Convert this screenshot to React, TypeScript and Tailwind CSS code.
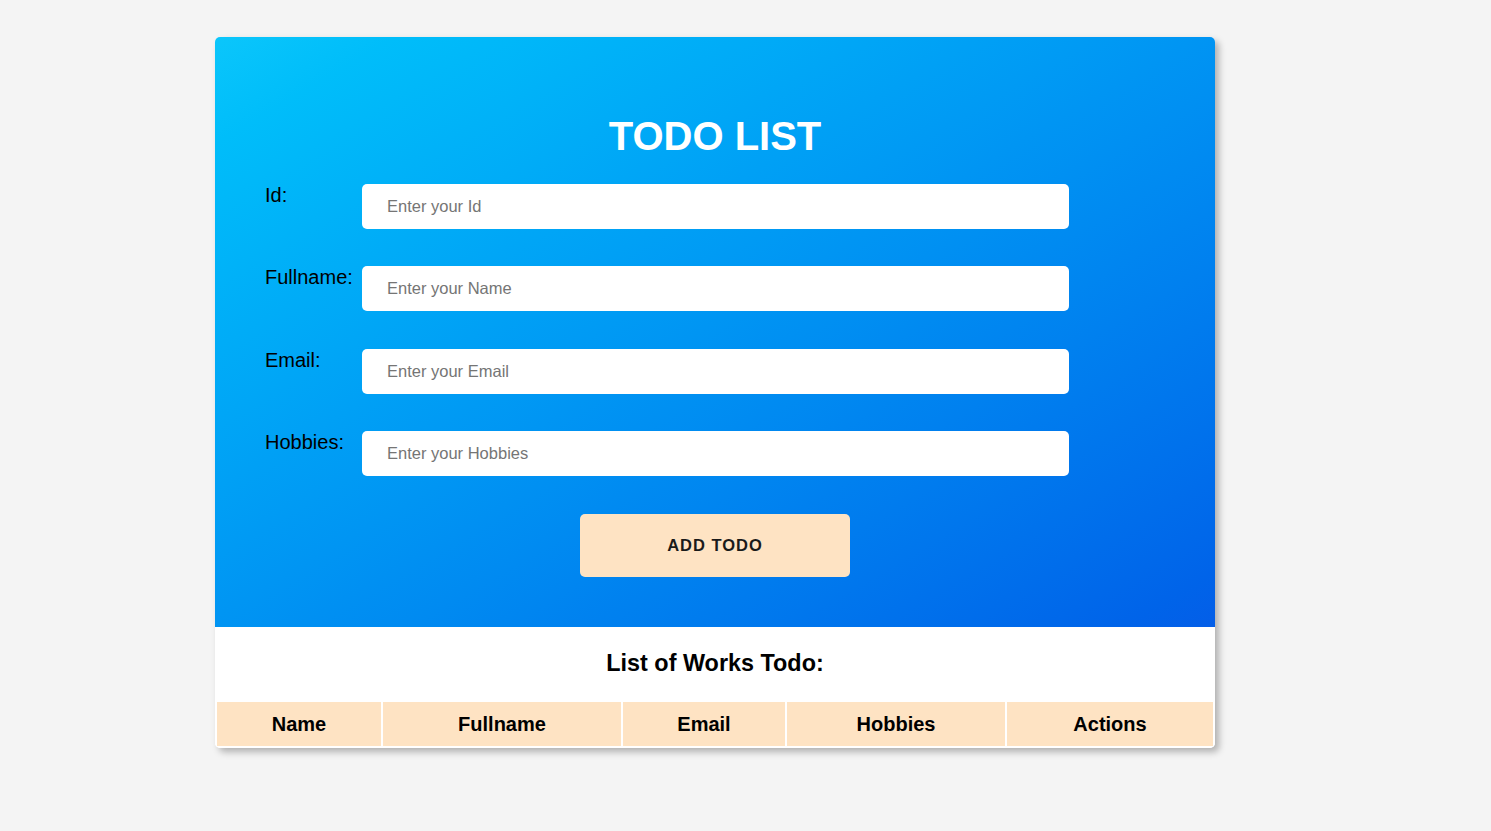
const fields = [
  { label: "Id:", placeholder: "Enter your Id", mt: "mt-0" },
  { label: "Fullname:", placeholder: "Enter your Name", mt: "mt-[37px]" },
  { label: "Email:", placeholder: "Enter your Email", mt: "mt-[38px]" },
  { label: "Hobbies:", placeholder: "Enter your Hobbies", mt: "mt-[37px]" },
]

const columns = [
  { title: "Name", w: "w-[164px]" },
  { title: "Fullname", w: "w-[238px]" },
  { title: "Email", w: "w-[162px]" },
  { title: "Hobbies", w: "w-[218px]" },
  { title: "Actions", w: "w-[206px]" },
]

export default function App() {
  return (
    <div className="min-h-screen bg-[#f4f4f4] font-['Liberation_Sans',Arial,sans-serif] pt-[37px] pl-[215px]">
      <div className="w-[1000px] rounded-[5px] overflow-hidden bg-white shadow-[4px_4px_7px_rgba(0,0,0,0.28)]">
        {/* form area */}
        <div className="bg-linear-to-br from-[#0bc6fb] to-[#045ee8] pt-[76px] pb-[50px]">
          <h1 className="text-center text-white text-[40px] font-bold leading-[46px] mb-[25px]">TODO LIST</h1>

          <div className="flex flex-col pl-[50px]">
            {fields.map((f) => (
              <div key={f.label} className={`flex items-start ${f.mt}`}>
                <label className="w-[97px] text-[20px] leading-[23px] text-black">{f.label}</label>
                <input
                  type="text"
                  placeholder={f.placeholder}
                  className="w-[707px] h-[45px] rounded-[5px] bg-white px-[25px] text-[16.5px] text-black placeholder:text-[#757575] outline-none"
                />
              </div>
            ))}
          </div>

          <div className="flex justify-center mt-[38px]">
            <button className="w-[270px] h-[63px] rounded-[5px] bg-[#fee3c3] text-[#1a1a1a] text-[16.5px] font-black tracking-[1px]">
              ADD TODO
            </button>
          </div>
        </div>

        {/* list */}
        <div className="bg-white">
          <h3 className="text-center text-[23.4px] font-bold text-black pt-[23px] pb-[25px] leading-[27px]">List of Works Todo:</h3>
          <table className="w-full border-separate border-spacing-[2px] mt-[-2px]">
            <thead>
              <tr>
                {columns.map((c) => (
                  <th key={c.title} className={`${c.w} h-[44px] bg-[#fee3c3] text-[20px] font-bold text-black text-center`}>
                    {c.title}
                  </th>
                ))}
              </tr>
            </thead>
          </table>
        </div>
      </div>
    </div>
  )
}
